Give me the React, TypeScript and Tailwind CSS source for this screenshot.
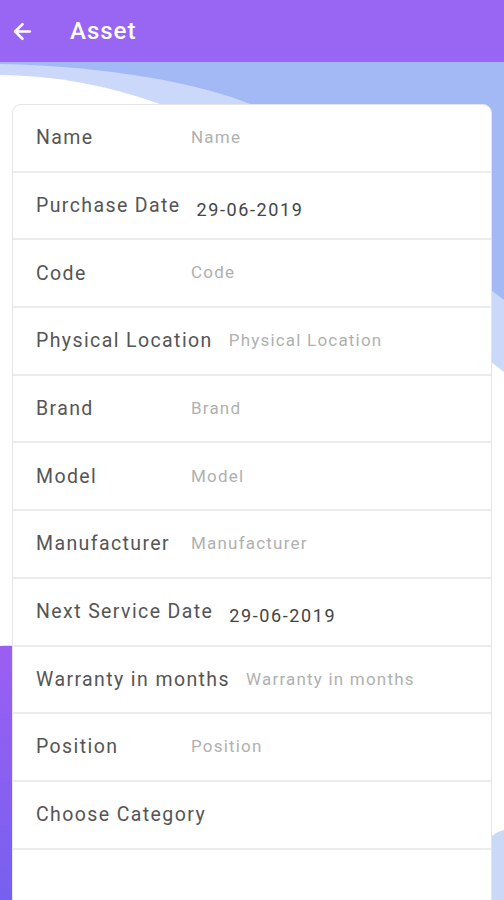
import { ArrowLeft } from "lucide-react";

type Field = { label: string; value: string; filled?: boolean };

const fields: Field[] = [
  { label: "Name", value: "Name" },
  { label: "Purchase Date", value: "29-06-2019", filled: true },
  { label: "Code", value: "Code" },
  { label: "Physical Location", value: "Physical Location" },
  { label: "Brand", value: "Brand" },
  { label: "Model", value: "Model" },
  { label: "Manufacturer", value: "Manufacturer" },
  { label: "Next Service Date", value: "29-06-2019", filled: true },
  { label: "Warranty in months", value: "Warranty in months" },
  { label: "Position", value: "Position" },
];

function Backdrop() {
  // decorative waves behind the form card
  return (
    <svg
      className="absolute inset-0 w-full h-full"
      viewBox="0 0 504 838"
      preserveAspectRatio="none"
    >
      <defs>
        <linearGradient id="purp" x1="0" y1="0" x2="0" y2="1">
          <stop offset="0" stopColor="#9b5ff2" />
          <stop offset="1" stopColor="#7760ef" />
        </linearGradient>
      </defs>
      <rect x="0" y="0" width="504" height="838" fill="#ffffff" />
      <rect x="0" y="0" width="504" height="310" fill="#a2b9f5" />
      <path d="M0,2 C110,4 200,22 250,42 L504,238 L504,838 L0,838 Z" fill="#cbd8f9" />
      <path d="M0,13 C70,14 120,28 160,42 L504,310 L504,838 L0,838 Z" fill="#ffffff" />
      <path d="M0,584 C50,580 110,610 140,700 L140,838 L0,838 Z" fill="url(#purp)" />
      <path d="M504,768 C485,772 470,800 465,838 L504,838 Z" fill="#ccd8f8" />
    </svg>
  );
}

export default function App() {
  return (
    <div className="w-[504px] h-[900px] overflow-hidden bg-white font-['Roboto','Noto_Sans',sans-serif]">
      <header className="h-[62px] bg-[#9966f4] flex items-center px-[10px]">
        <ArrowLeft className="w-[25px] h-[25px] text-white" strokeWidth={2.5} />
        <h1 className="ml-[35px] text-white text-[24px] font-medium tracking-[1px]">Asset</h1>
      </header>

      <div className="relative h-[838px] pt-[42px]">
        <Backdrop />
        <div className="relative mx-[12px] bg-white rounded-[9px] border border-[#e6e6e6] h-[900px]">
          {fields.map((f) => (
            <div
              key={f.label}
              className="h-[67.7px] border-b-2 border-[#ececec] flex items-center pl-[23px]"
            >
              <span className="min-w-[155px] pr-[16px] text-[19.5px] tracking-[1.4px] text-[#555555] whitespace-nowrap">
                {f.label}
              </span>
              {f.filled ? (
                <span className="mt-[8px] text-[18px] tracking-[1.6px] text-[#444444]">{f.value}</span>
              ) : (
                <span className="text-[17px] tracking-[1.2px] text-[#b0b0b0]">{f.value}</span>
              )}
            </div>
          ))}
          <div className="h-[67.7px] border-b-2 border-[#ececec] flex items-center pl-[23px]">
            <span className="text-[19.5px] tracking-[1.4px] text-[#555555]">Choose Category</span>
          </div>
        </div>
      </div>
    </div>
  );
}
